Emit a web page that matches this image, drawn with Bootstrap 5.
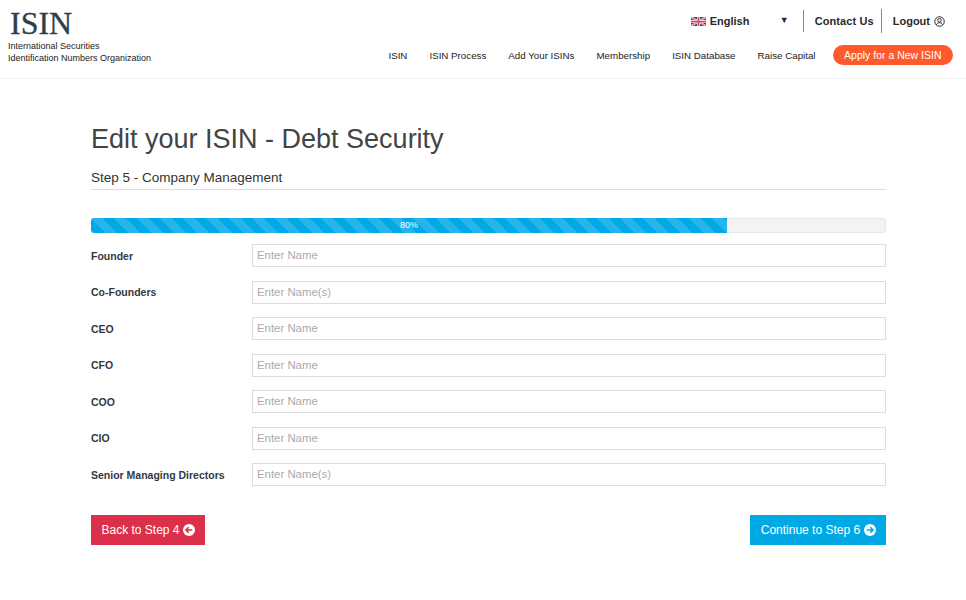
<!DOCTYPE html>
<html lang="en">
<head>
<meta charset="UTF-8">
<meta name="viewport" content="width=device-width, initial-scale=1.0">
<title>Edit your ISIN - Debt Security</title>

<link href="https://cdn.jsdelivr.net/npm/bootstrap@5.3.3/dist/css/bootstrap.min.css" rel="stylesheet">

<style>
body { font-family: "Liberation Sans", Arial, sans-serif; color: #333; background: #fff; }
.site-head { height: 79px; border-bottom: 1px solid #f0f0f0; padding: 0 13px 0 8px; }
.logo-word { font-family: "Liberation Serif", serif; font-size: 32px; line-height: 26px; height: 30px; color: #2c3e50; padding: 10px 0 0 2px; box-sizing: content-box; -webkit-text-stroke: 0.3px #2c3e50; }
.logo-sub { font-size: 9px; line-height: 12px; color: #222; }
.top-links { height: 22px; margin-top: 10px; padding-right: 8px; font-size: 11px; font-weight: 700; color: #2b2b2b; }
.top-links a { color: #2b2b2b; text-decoration: none; }
.lang-pick { width: 98px; }
.lang-arrow { font-size: 9px; }
.top-sep { width: 1px; height: 22px; background: #888; margin: 0 11px 0 14px; }
.top-sep-b { height: 24px; margin: 0 11px 0 7px; }
.contact-link { letter-spacing: 0.1px; }
.main-links { margin-top: 13px; font-size: 9.75px; }
.main-links a { color: #222; text-decoration: none; margin-right: 22px; padding-top: 2px; }
.main-links a.raise-link { margin-right: 17px; }
.main-links a.apply-btn { background: #ff5a2c; color: #fff; border-radius: 10px; height: 20px; line-height: 20px; padding: 0 11.5px; margin-right: 0; font-size: 10.5px; }
.page-wrap { width: 795px; margin-left: 91px; }
.page-title { font-size: 27px; font-weight: 400; line-height: 32px; color: #444; margin: 44px 0 0; }
.page-step { font-size: 13.5px; line-height: 20px; color: #333; font-weight: 400; margin: 13px 0 0; padding-bottom: 1px; border-bottom: 1px solid #ddd; }
.step-bar { height: 15px; margin-top: 28px; margin-bottom: 11px; background: #f3f3f3; box-shadow: inset 0 0 0 1px #e9e9e9; border-radius: 3px; font-size: 9px; }
.step-bar .progress-bar { background-color: #00a8e6; background-size: 23px 23px; }
.field-row { height: 23px; margin-bottom: 13.5px; }
.field-row label { width: 161px; flex: none; font-size: 10.5px; font-weight: 700; color: #33393f; padding-top: 2px; }
.field-row input { height: 23px; border: 1px solid #dcdcdc; border-radius: 0; padding: 0 4px 1px; font-size: 11.4px; color: #333; }
.field-row input::placeholder { color: #aaa; opacity: 1; }
.step-actions { margin-top: 29px; }
.step-btn { height: 30px; border-radius: 0; border: 0; color: #fff; font-size: 12px; padding: 0 10.5px; }
.btn-back { background: #dc2f4a; }
.btn-next { background: #00a8e6; }
.step-icon { vertical-align: -1.5px; }
</style>
</head>
<body>

<!-- Header -->
<header class="site-head d-flex justify-content-between">
  <div>
    <div class="logo-word">ISIN</div>
    <div class="logo-sub">International Securities<br>Identification Numbers Organization</div>
  </div>
  <div class="d-flex flex-column align-items-end">
    <div class="top-links d-flex align-items-center">
      <div class="lang-pick d-flex align-items-center justify-content-between">
        <span class="d-flex align-items-center gap-1">
          <svg width="15" height="9" viewBox="0 0 60 36">
            <rect width="60" height="36" fill="#3b4a8c"/>
            <path d="M0 0L60 36M60 0L0 36" stroke="#fff" stroke-width="7"/>
            <path d="M0 0L60 36M60 0L0 36" stroke="#d9435a" stroke-width="3"/>
            <path d="M30 0V36M0 18H60" stroke="#fff" stroke-width="12"/>
            <path d="M30 0V36M0 18H60" stroke="#d9435a" stroke-width="7"/>
          </svg>
          English
        </span>
        <span class="lang-arrow">&#9660;</span>
      </div>
      <span class="top-sep"></span>
      <a href="#" class="contact-link">Contact Us</a>
      <span class="top-sep top-sep-b"></span>
      <a href="#" class="d-flex align-items-center gap-1">Logout
        <svg width="11" height="11" viewBox="0 0 22 22" fill="none" stroke="#2b2b2b" stroke-width="2">
          <circle cx="11" cy="11" r="9.5"/>
          <circle cx="11" cy="8.500" r="3.500"/>
          <path d="M4.500 17.500c1.500-3 3.800-4 6.500-4s5 1 6.500 4"/>
        </svg>
      </a>
    </div>
    <nav class="main-links d-flex align-items-center">
      <a href="#">ISIN</a>
      <a href="#">ISIN Process</a>
      <a href="#">Add Your ISINs</a>
      <a href="#">Membership</a>
      <a href="#">ISIN Database</a>
      <a href="#" class="raise-link">Raise Capital</a>
      <a href="#" class="apply-btn">Apply for a New ISIN</a>
    </nav>
  </div>
</header>

<!-- Form -->
<main class="page-wrap">
  <h1 class="page-title">Edit your ISIN - Debt Security</h1>
  <h2 class="page-step">Step 5 - Company Management</h2>

  <div class="progress step-bar">
    <div class="progress-bar progress-bar-striped" style="width: 80%">80%</div>
  </div>

  <form>
    <div class="field-row d-flex align-items-center"><label>Founder</label><input class="form-control" placeholder="Enter Name"></div>
    <div class="field-row d-flex align-items-center"><label>Co-Founders</label><input class="form-control" placeholder="Enter Name(s)"></div>
    <div class="field-row d-flex align-items-center"><label>CEO</label><input class="form-control" placeholder="Enter Name"></div>
    <div class="field-row d-flex align-items-center"><label>CFO</label><input class="form-control" placeholder="Enter Name"></div>
    <div class="field-row d-flex align-items-center"><label>COO</label><input class="form-control" placeholder="Enter Name"></div>
    <div class="field-row d-flex align-items-center"><label>CIO</label><input class="form-control" placeholder="Enter Name"></div>
    <div class="field-row d-flex align-items-center"><label>Senior Managing Directors</label><input class="form-control" placeholder="Enter Name(s)"></div>

    <div class="step-actions d-flex justify-content-between">
      <button type="button" class="btn step-btn btn-back">Back to Step 4
        <svg width="12" height="12" viewBox="0 0 22 22" class="step-icon"><circle cx="11" cy="11" r="11" fill="#fff"/><path d="M17 11H6M10.500 6L5.500 11l5 5" fill="none" stroke="#dc2f4a" stroke-width="3"/></svg>
      </button>
      <button type="button" class="btn step-btn btn-next">Continue to Step 6
        <svg width="12" height="12" viewBox="0 0 22 22" class="step-icon"><circle cx="11" cy="11" r="11" fill="#fff"/><path d="M5 11h11M11.500 6l5 5-5 5" fill="none" stroke="#00a8e6" stroke-width="3"/></svg>
      </button>
    </div>
  </form>
</main>

<script src="https://cdn.jsdelivr.net/npm/bootstrap@5.3.3/dist/js/bootstrap.bundle.min.js"></script>
</body>
</html>
